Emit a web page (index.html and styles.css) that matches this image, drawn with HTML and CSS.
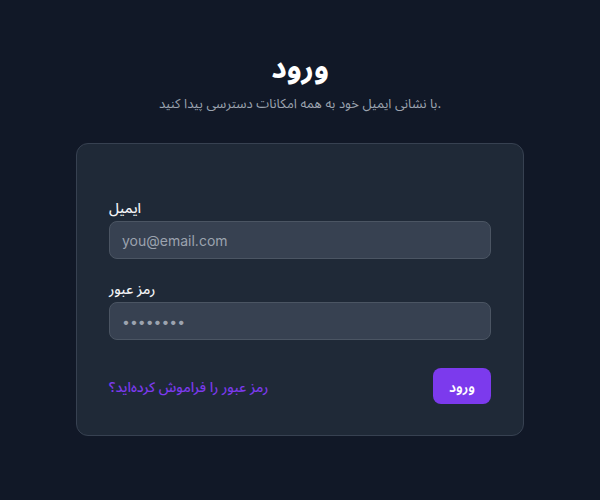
FILE: index.html
```html
<!DOCTYPE html>
<html lang="fa">
<head>
<meta charset="utf-8">
<title>ورود</title>
<link rel="stylesheet" href="styles.css">
</head>
<body>
<main class="page">
  <header class="head">
    <h1 class="title">ورود</h1>
    <p class="subtitle">با نشانی ایمیل خود به همه امکانات دسترسی پیدا کنید.</p>
  </header>
  <section class="card">
    <form class="form">
      <div class="field">
        <label class="label" for="email">ایمیل</label>
        <input class="input" id="email" type="email" placeholder="you@email.com">
      </div>
      <div class="field">
        <label class="label" for="password">رمز عبور</label>
        <input class="input" id="password" type="password" value="12345678">
      </div>
      <div class="actions">
        <a class="link" href="#">رمز عبور را فراموش کرده‌اید؟</a>
        <button class="btn" type="button">ورود</button>
      </div>
    </form>
  </section>
</main>
</body>
</html>
```
FILE: styles.css
```css
* { box-sizing: border-box; }
html, body { margin: 0; padding: 0; }
body {
  background: #111827;
  color: #f9fafb;
  font-family: Inter, "Noto Sans Arabic UI", "Noto Sans Arabic", "Noto Sans", sans-serif;
  width: 600px;
  height: 500px;
}
.page {
  display: flex;
  flex-direction: column;
  align-items: center;
  padding-top: 49px;
}
.head { text-align: center; }
.title {
  margin: 0;
  font-size: 30px;
  line-height: 36px;
  font-weight: 700;
  color: #ffffff;
}
.subtitle {
  margin: 8px 0 0;
  font-size: 13px;
  line-height: 20px;
  color: #9ca3af;
}
.card {
  margin-top: 30px;
  width: 448px;
  background: #1f2937;
  border: 1px solid #374151;
  border-radius: 12px;
  padding: 54px 32px 31px;
}
.form {
  display: flex;
  flex-direction: column;
  gap: 20px;
}
.field {
  display: flex;
  flex-direction: column;
  gap: 3px;
}
.label {
  font-size: 14px;
  line-height: 20px;
  font-weight: 500;
  color: #f3f4f6;
}
.input {
  height: 38px;
  width: 100%;
  background: #374151;
  border: 1px solid #4b5563;
  border-radius: 8px;
  padding: 0 12px;
  font-family: Inter, sans-serif;
  font-size: 14px;
  color: #9ca3af;
  outline: none;
}
.input::placeholder { color: #9ca3af; }
.actions {
  margin-top: 8px;
  display: flex;
  justify-content: space-between;
  align-items: center;
}
.link {
  font-size: 14px;
  font-weight: 500;
  color: #7c3aed;
  text-decoration: none;
}
.btn {
  height: 36px;
  padding: 0 16px;
  border: none;
  border-radius: 8px;
  background: #7c3aed;
  color: #ffffff;
  font-family: Inter, "Noto Sans Arabic UI", "Noto Sans Arabic", "Noto Sans", sans-serif;
  font-size: 14px;
  font-weight: 600;
}
```
